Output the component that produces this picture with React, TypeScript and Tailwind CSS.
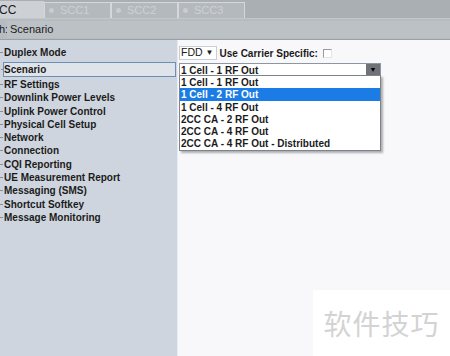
import React from "react";

const menuItems = [
  "Duplex Mode",
  "Scenario",
  "RF Settings",
  "Downlink Power Levels",
  "Uplink Power Control",
  "Physical Cell Setup",
  "Network",
  "Connection",
  "CQI Reporting",
  "UE Measurement Report",
  "Messaging (SMS)",
  "Shortcut Softkey",
  "Message Monitoring",
];

const options = [
  "1 Cell - 1 RF Out",
  "1 Cell - 2 RF Out",
  "1 Cell - 4 RF Out",
  "2CC CA - 2 RF Out",
  "2CC CA - 4 RF Out",
  "2CC CA - 4 RF Out - Distributed",
];

const font = { fontFamily: '"Liberation Sans", Arial, sans-serif' };

const Tab: React.FC<{ label: string }> = ({ label }) => (
  <div className="w-[67px] h-[16px] flex items-center gap-[6px] pl-[4px] border border-[#d4d8db] border-b-0 bg-[#b3b9bd] text-[11px] text-[#cdd1d4]">
    <span className="w-[5px] h-[5px] rounded-full bg-[#c9cdd0]"></span>
    {label}
  </div>
);

const App: React.FC = () => {
  return (
    <div className="w-[450px] h-[356px] overflow-hidden flex flex-col text-[#1b1b1b]" style={font}>
      {/* tab strip */}
      <div className="h-[19px] bg-[#a9afb3] flex items-end border-b border-[#c3c7ca]">
        <div className="w-[45px] h-[17px] flex items-center bg-[#cdd1d5] text-[12px] text-[#202020] -ml-[1px]">CC</div>
        <Tab label="SCC1" />
        <Tab label="SCC2" />
        <Tab label="SCC3" />
      </div>

      {/* path */}
      <div className="h-[21px] bg-[#b7bcc0] flex items-center text-[11px] border-b border-[#9aa0a4]">
        <span className="w-[8px] -ml-[1px]">h:</span>
        <span className="flex-1 h-[17px] flex items-center pl-[3px] bg-[#bcc1c5]">Scenario</span>
      </div>

      <div className="flex-1 flex">
        {/* tree */}
        <div className="w-[177px] bg-[#cfd5de] pt-[6px] flex flex-col text-[10px] font-bold">
          {menuItems.map((item) =>
            item === "Scenario" ? (
              <div key={item} className="h-[15px] mt-[2.5px] mb-[1px] ml-[3px] mr-[1px] flex items-center border border-[#6e8fb4] bg-[#dfe4ea] pl-[1px]">
                <span className="w-[2px] h-px bg-[#8a8f95] mr-[1px] -ml-[4px]"></span>
                {item}
              </div>
            ) : (
              <div key={item} className="h-[13.3px] flex items-center">
                <span className="w-[3px] h-px bg-[#8a8f95] mr-[1px]"></span>
                {item}
              </div>
            )
          )}
        </div>
        <div className="w-[1px] bg-[#e7ebf5]"></div>

        {/* settings */}
        <div className="flex-1 bg-[#f8f7fa] relative pt-[6px] pl-[1px]">
          <div className="flex items-center h-[14px] text-[10px]">
            <div className="h-[14px] flex items-center border border-[#c9ced6] bg-white pl-[1px] pr-[2px] gap-[3px] text-[10.5px]">
              FDD
              <span className="text-[8px]">▼</span>
            </div>
            <span className="font-bold ml-[3px]">Use Carrier Specific:</span>
            <span className="w-[9px] h-[9px] border border-[#9a9a9a] border-r-[#e4e4e4] border-b-[#e4e4e4] ml-[5px] bg-white"></span>
          </div>

          <div className="mt-[3px] w-[202px] h-[15px] flex items-center border border-[#8d97a3] bg-white text-[10px] font-bold pl-[1px]">
            <span className="flex-1">1 Cell - 1 RF Out</span>
            <span className="w-[14px] h-[13px] bg-[#6f7276] flex items-center justify-center text-[7px] text-black">▼</span>
          </div>

          <div className="absolute left-[1px] top-[35px] w-[202px] bg-white border border-[#7c838c] shadow-[2px_2px_2px_rgba(0,0,0,0.3)] text-[10px] font-bold pb-[1px]">
            {options.map((o, i) => (
              <div
                key={o}
                className={
                  i === 1
                    ? "h-[13px] flex items-center pl-[1px] bg-[#1a7ce4] text-white"
                    : "h-[12px] flex items-center pl-[1px]"
                }
              >
                {o}
              </div>
            ))}
          </div>
        </div>
      </div>

      {/* watermark */}
      <div className="absolute left-[313px] top-[290px] w-[137px] h-[66px] bg-white flex items-center justify-center">
        <span className="text-[28px] text-[#d3d3d3] tracking-[1px]" style={{ fontFamily: '"Noto Sans CJK SC", sans-serif' }}>
          软件技巧
        </span>
      </div>
    </div>
  );
};

export default App;
